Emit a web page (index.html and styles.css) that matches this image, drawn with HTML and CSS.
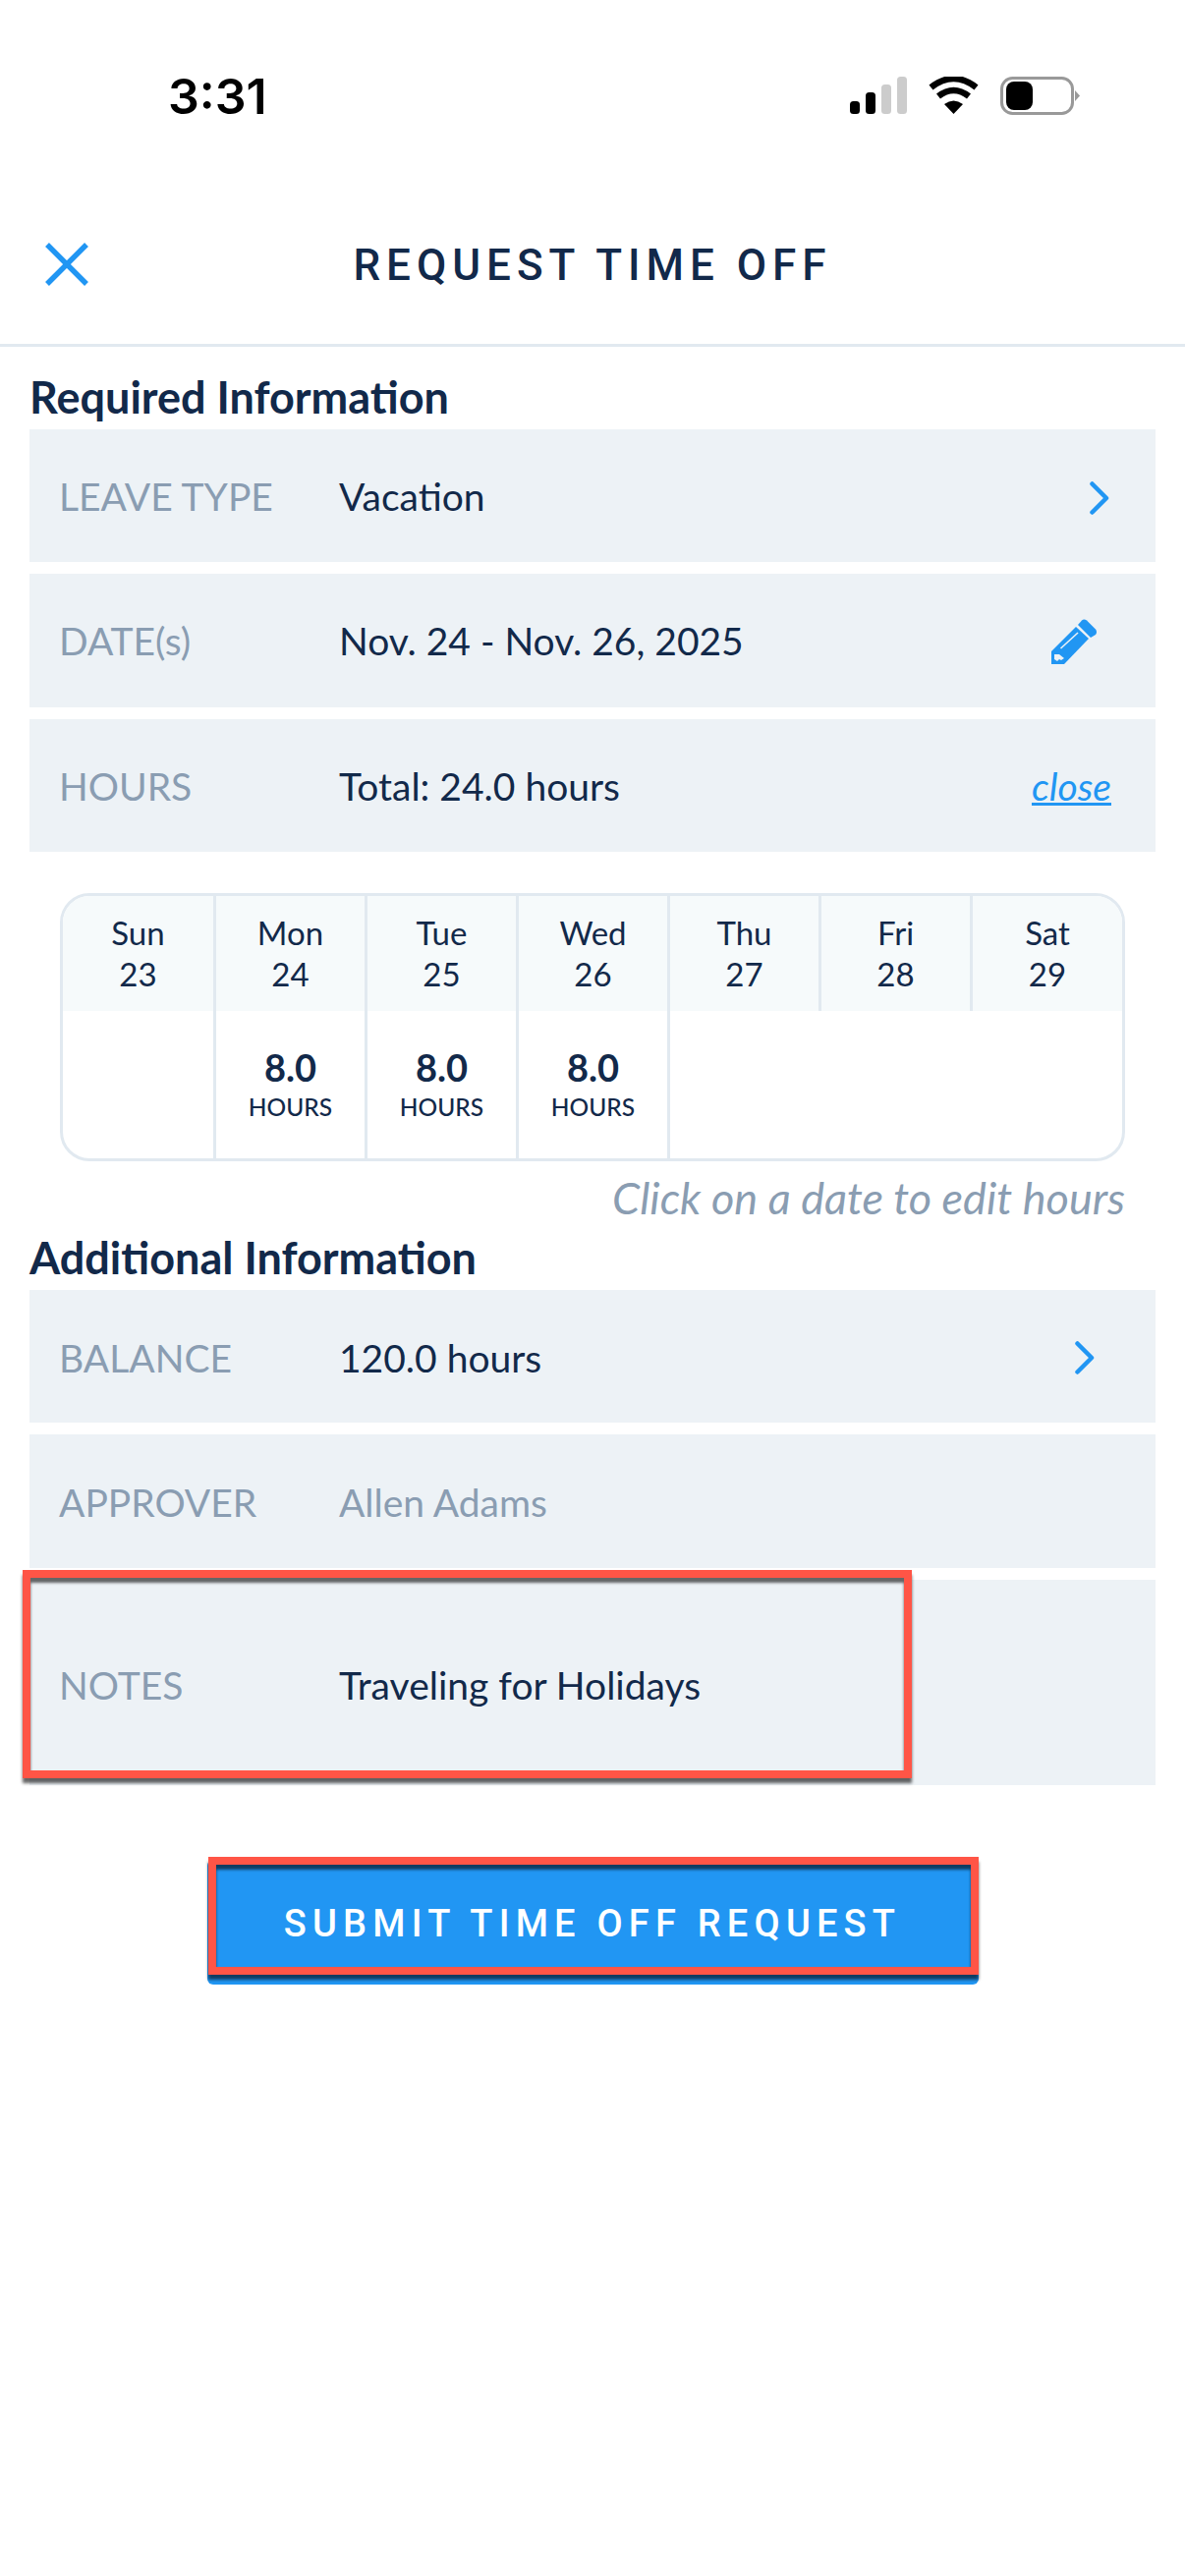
FILE: index.html
```html
<!DOCTYPE html>
<html lang="en">
<head>
    <meta charset="UTF-8">
    <meta name="viewport" content="width=device-width, initial-scale=1.0">
    <title>Request Time Off</title>
    <link rel="stylesheet" href="styles.css">
</head>
<body>

<!-- Status bar -->
<div class="status-bar">
    <span class="status-time">3:31</span>
    <div class="status-icons">
        <svg class="icon-signal" width="58" height="38" viewBox="0 0 58 38">
            <rect x="0" y="25" width="10" height="13" rx="3.5" fill="#000"/>
            <rect x="16" y="16" width="10" height="22" rx="3.5" fill="#000"/>
            <rect x="32" y="8" width="10" height="30" rx="3.5" fill="#ccc"/>
            <rect x="48" y="0" width="10" height="38" rx="3.5" fill="#ccc"/>
        </svg>
        <svg class="icon-wifi" width="51" height="38" viewBox="0 0 51 38">
            <path d="M25.5 38 L16 28 Q25.5 21 35 28 Z" fill="#000"/>
            <path d="M10 20 Q25.5 8 41 20" fill="none" stroke="#000" stroke-width="6.5"/>
            <path d="M2.5 11 Q25.5 -7 48.5 11" fill="none" stroke="#000" stroke-width="6.5"/>
        </svg>
        <svg class="icon-battery" width="81" height="39" viewBox="0 0 81 39">
            <rect x="1.5" y="1.5" width="72" height="36" rx="11" fill="none" stroke="#999" stroke-width="3"/>
            <rect x="6" y="5" width="27" height="29" rx="8" fill="#000"/>
            <path d="M76 14 L81 19.5 L76 25 Z" fill="#999"/>
        </svg>
    </div>
</div>

<!-- Header -->
<div class="page-header">
    <svg class="icon-close" width="44" height="44" viewBox="0 0 44 44">
        <path d="M2 2 L42 42 M42 2 L2 42" stroke="#2196f3" stroke-width="5.5" fill="none"/>
    </svg>
    <h1>REQUEST TIME OFF</h1>
</div>

<div class="content">
    <h2>Required Information</h2>
    <div class="row-list">
        <div class="row">
            <span class="row-label">LEAVE TYPE</span>
            <span class="row-value">Vacation</span>
            <svg class="icon-chevron lowered" width="20" height="34" viewBox="0 0 20 34">
                <path d="M2.5 2.5 L17 17 L2.5 31.5" stroke="#2196f3" stroke-width="4.5" stroke-linecap="round" stroke-linejoin="round" fill="none"/>
            </svg>
        </div>
        <div class="row">
            <span class="row-label">DATE(s)</span>
            <span class="row-value">Nov. 24 - Nov. 26, 2025</span>
            <svg class="icon-pencil" width="46" height="46" viewBox="0 0 46 46">
                <path d="M0 33 L25 8 L38 20 L13 46 L0 46 Z" fill="#2196f3"/>
                <path d="M27 6 L31 1.5 Q33 -0.5 36 1.5 L45 10.5 Q47 13 45 16 L40 19 Z" fill="#2196f3"/>
                <path d="M9.5 30 L27 14" stroke="#edf2f6" stroke-width="1.6"/>
                <path d="M3 36 L8 36 L13 40 L10 42 L8 41 L6 43 L3 41 Z" fill="#edf2f6"/>
            </svg>
        </div>
        <div class="row low">
            <span class="row-label">HOURS</span>
            <span class="row-value">Total: 24.0 hours</span>
            <a class="row-link">close</a>
        </div>
    </div>

    <div class="week">
        <div class="day">
            <div class="day-head">Sun<br>23</div>
            <div class="day-body"></div>
        </div>
        <div class="day">
            <div class="day-head">Mon<br>24</div>
            <div class="day-body"><b>8.0</b><small>HOURS</small></div>
        </div>
        <div class="day">
            <div class="day-head">Tue<br>25</div>
            <div class="day-body"><b>8.0</b><small>HOURS</small></div>
        </div>
        <div class="day">
            <div class="day-head">Wed<br>26</div>
            <div class="day-body"><b>8.0</b><small>HOURS</small></div>
        </div>
        <div class="day open">
            <div class="day-head">Thu<br>27</div>
            <div class="day-body"></div>
        </div>
        <div class="day open">
            <div class="day-head">Fri<br>28</div>
            <div class="day-body"></div>
        </div>
        <div class="day open">
            <div class="day-head">Sat<br>29</div>
            <div class="day-body"></div>
        </div>
    </div>
    <p class="week-hint">Click on a date to edit hours</p>

    <h2 class="second">Additional Information</h2>
    <div class="row-list">
        <div class="row low">
            <span class="row-label">BALANCE</span>
            <span class="row-value">120.0 hours</span>
            <svg class="icon-chevron shifted" width="20" height="34" viewBox="0 0 20 34">
                <path d="M2.5 2.5 L17 17 L2.5 31.5" stroke="#2196f3" stroke-width="4.5" stroke-linecap="round" stroke-linejoin="round" fill="none"/>
            </svg>
        </div>
        <div class="row low">
            <span class="row-label">APPROVER</span>
            <span class="row-value muted">Allen Adams</span>
        </div>
        <div class="row notes">
            <span class="row-label">NOTES</span>
            <span class="row-value">Traveling for Holidays</span>
            <div class="callout notes-callout"></div>
        </div>
    </div>

    <div class="submit-wrap">
        <button class="submit-btn">SUBMIT TIME OFF REQUEST</button>
        <div class="callout submit-callout"></div>
    </div>
</div>

</body>
</html>
```

FILE: styles.css
```css
body {
    margin: 0;
    height: 2622px;
    overflow: hidden;
    background-color: #fff;
    font-family: Lato, "Open Sans", sans-serif;
    color: #12294a;
}

/* Status bar */
.status-bar {
    height: 196px;
    display: flex;
    justify-content: space-between;
    align-items: flex-start;
    box-sizing: border-box;
    padding: 68px 107px 0 171px;
}

.status-time {
    font-family: Inter, "Liberation Sans", sans-serif;
    font-size: 50px;
    font-weight: 600;
    line-height: 60px;
    color: #000;
}

.status-icons {
    display: flex;
    align-items: flex-start;
    margin-top: 10px;
}

.icon-wifi {
    margin-left: 22px;
}

.icon-battery {
    margin-left: 22px;
}

/* Header */
.page-header {
    height: 154px;
    border-bottom: 3px solid #e1e9f0;
    display: flex;
    align-items: center;
    justify-content: center;
    position: relative;
}

.page-header h1 {
    margin: 0 0 6px;
    font-family: Roboto, sans-serif;
    font-size: 44px;
    font-weight: 500;
    letter-spacing: 6px;
    color: #12294a;
}

.icon-close {
    position: absolute;
    left: 46px;
    top: 51px;
}

/* Content */
.content {
    padding: 0 30px;
}

h2 {
    margin: 0;
    height: 84px;
    line-height: 102px;
    font-size: 45px;
    font-weight: 700;
    color: #12294a;
}

h2.second {
    height: 69px;
    line-height: 72px;
}

.row-list {
    display: flex;
    flex-direction: column;
    gap: 12px;
}

.row {
    height: 135.33px;
    display: flex;
    align-items: center;
    box-sizing: border-box;
    padding: 0 47px 0 30px;
    background-color: #edf2f6;
    font-size: 39px;
}

.row-label {
    width: 285px;
    flex-shrink: 0;
    color: #8a9db2;
}

.row-value {
    flex: 1;
}

.row-value.muted {
    color: #8a9db2;
}

.row.low {
    padding-top: 2px;
}

.row-link {
    margin-right: -2px;
    font-style: italic;
    color: #2196f3;
    text-decoration: underline;
}

.icon-pencil {
    margin: 3px 13px 0 0;
}

.icon-chevron.lowered {
    margin-top: 5px;
}

.icon-chevron.shifted {
    margin-right: 15px;
}

.row.notes {
    height: 209px;
    padding-top: 5px;
    position: relative;
}

/* Week table */
.week {
    margin: 42px 0 0 31px;
    width: 1084px;
    height: 273px;
    box-sizing: border-box;
    border: 3px solid #e1e9f0;
    border-radius: 30px;
    overflow: hidden;
    display: grid;
    grid-template-columns: 156px repeat(5, 154px) 1fr;
}

.day {
    display: flex;
    flex-direction: column;
}

.day-head {
    height: 117px;
    box-sizing: border-box;
    padding-top: 16px;
    text-align: center;
    font-size: 33px;
    line-height: 42px;
    background-color: #f6fafb;
    border-right: 3px solid #e1e9f0;
}

.day:last-child .day-head {
    border-right: none;
}

.day-body {
    flex: 1;
    display: flex;
    flex-direction: column;
    align-items: center;
    padding-top: 34px;
    border-right: 3px solid #e1e9f0;
}

.day.open .day-body {
    border-right: none;
}

.day-body b {
    font-size: 38px;
    line-height: 46px;
}

.day-body small {
    font-size: 24.5px;
    font-weight: 500;
    line-height: 36px;
}

.week-hint {
    margin: 12px 31px 0 0;
    text-align: right;
    font-size: 45px;
    font-style: italic;
    line-height: 50px;
    color: #8a9db2;
}

/* Submit */
.submit-wrap {
    position: relative;
    width: 785px;
    margin: 76px auto 0;
}

.submit-btn {
    display: block;
    width: 100%;
    height: 127px;
    padding-top: 4px;
    border: none;
    border-radius: 6px;
    background-color: #2196f3;
    color: #fff;
    font-family: Roboto, sans-serif;
    font-size: 38px;
    font-weight: 500;
    letter-spacing: 6.2px;
}

/* Red annotation boxes */
.callout {
    position: absolute;
    box-sizing: border-box;
    border: 8px solid #ff5546;
    box-shadow: 0 5px 3px rgba(0, 0, 0, 0.6), inset 0 5px 3px rgba(0, 0, 0, 0.6);
}

.notes-callout {
    left: -7px;
    top: -10px;
    width: 905px;
    height: 212px;
}

.submit-callout {
    left: 1px;
    top: -3px;
    width: 784px;
    height: 120px;
}
```
